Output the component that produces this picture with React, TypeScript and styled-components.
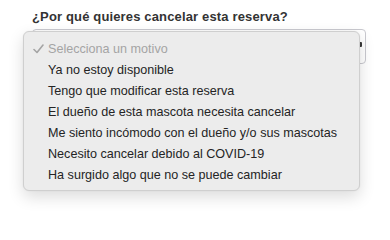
import React from "react";
import styled, { createGlobalStyle } from "styled-components";

const GlobalStyle = createGlobalStyle`
  html, body {
    margin: 0;
    padding: 0;
    background: #ffffff;
  }
  body {
    font-family: "Liberation Sans", Arial, sans-serif;
    -webkit-font-smoothing: antialiased;
  }
`;

const Page = styled.div`
  width: 390px;
  height: 216px;
  padding: 9px 24px 0 32px;
  box-sizing: border-box;
  display: flex;
  flex-direction: column;
  gap: 4px;
`;

const Question = styled.label`
  display: block;
  font-size: 13px;
  font-weight: 700;
  color: #333333;
  line-height: 16px;
  letter-spacing: 0.15px;
`;

const Field = styled.div`
  position: relative;
  width: 334px;
`;

const SelectBox = styled.div`
  height: 35px;
  box-sizing: border-box;
  border: 1px solid #c9c9cf;
  border-radius: 4px;
  background: #ffffff;
  display: flex;
  align-items: center;
  justify-content: flex-end;
  padding-right: 3px;
`;

const Chevron = styled.span`
  width: 3px;
  height: 5px;
  margin-top: -4px;
  background: #3a3a3a;
  border-radius: 1px;
`;

/* popup list lies over the select, as the native menu does */
const Menu = styled.ul`
  position: absolute;
  left: -9px;
  top: 2px;
  width: 337px;
  margin: 0;
  padding: 6px 0 5px;
  list-style: none;
  box-sizing: border-box;
  background: #ececec;
  border: 1px solid #cfcfcf;
  border-radius: 6px;
  box-shadow: 0 6px 16px rgba(0, 0, 0, 0.14), 0 0 2px rgba(0, 0, 0, 0.06);
`;

const Option = styled.li<{ $placeholder?: boolean }>`
  display: flex;
  align-items: center;
  height: 21px;
  font-size: 12.6px;
  color: ${(p) => (p.$placeholder ? "#a4a4a4" : "#242424")};
  white-space: nowrap;
`;

const CheckSlot = styled.span`
  width: 24px;
  display: flex;
  justify-content: flex-end;
  padding-right: 4px;
  box-sizing: border-box;
`;

const options = [
  "Ya no estoy disponible",
  "Tengo que modificar esta reserva",
  "El dueño de esta mascota necesita cancelar",
  "Me siento incómodo con el dueño y/o sus mascotas",
  "Necesito cancelar debido al COVID-19",
  "Ha surgido algo que no se puede cambiar",
];

export default function App() {
  return (
    <Page>
      <GlobalStyle />
      <Question>¿Por qué quieres cancelar esta reserva?</Question>
      <Field>
        <SelectBox>
          <Chevron />
        </SelectBox>
        <Menu>
          <Option $placeholder>
            <CheckSlot>
              <svg width="11" height="10" viewBox="0 0 11 10">
                <path
                  d="M1 5.5 L4 8.5 L10 1"
                  fill="none"
                  stroke="#a4a4a4"
                  strokeWidth="1.6"
                  strokeLinecap="round"
                  strokeLinejoin="round"
                />
              </svg>
            </CheckSlot>
            Selecciona un motivo
          </Option>
          {options.map((o) => (
            <Option key={o}>
              <CheckSlot />
              {o}
            </Option>
          ))}
        </Menu>
      </Field>
    </Page>
  );
}
